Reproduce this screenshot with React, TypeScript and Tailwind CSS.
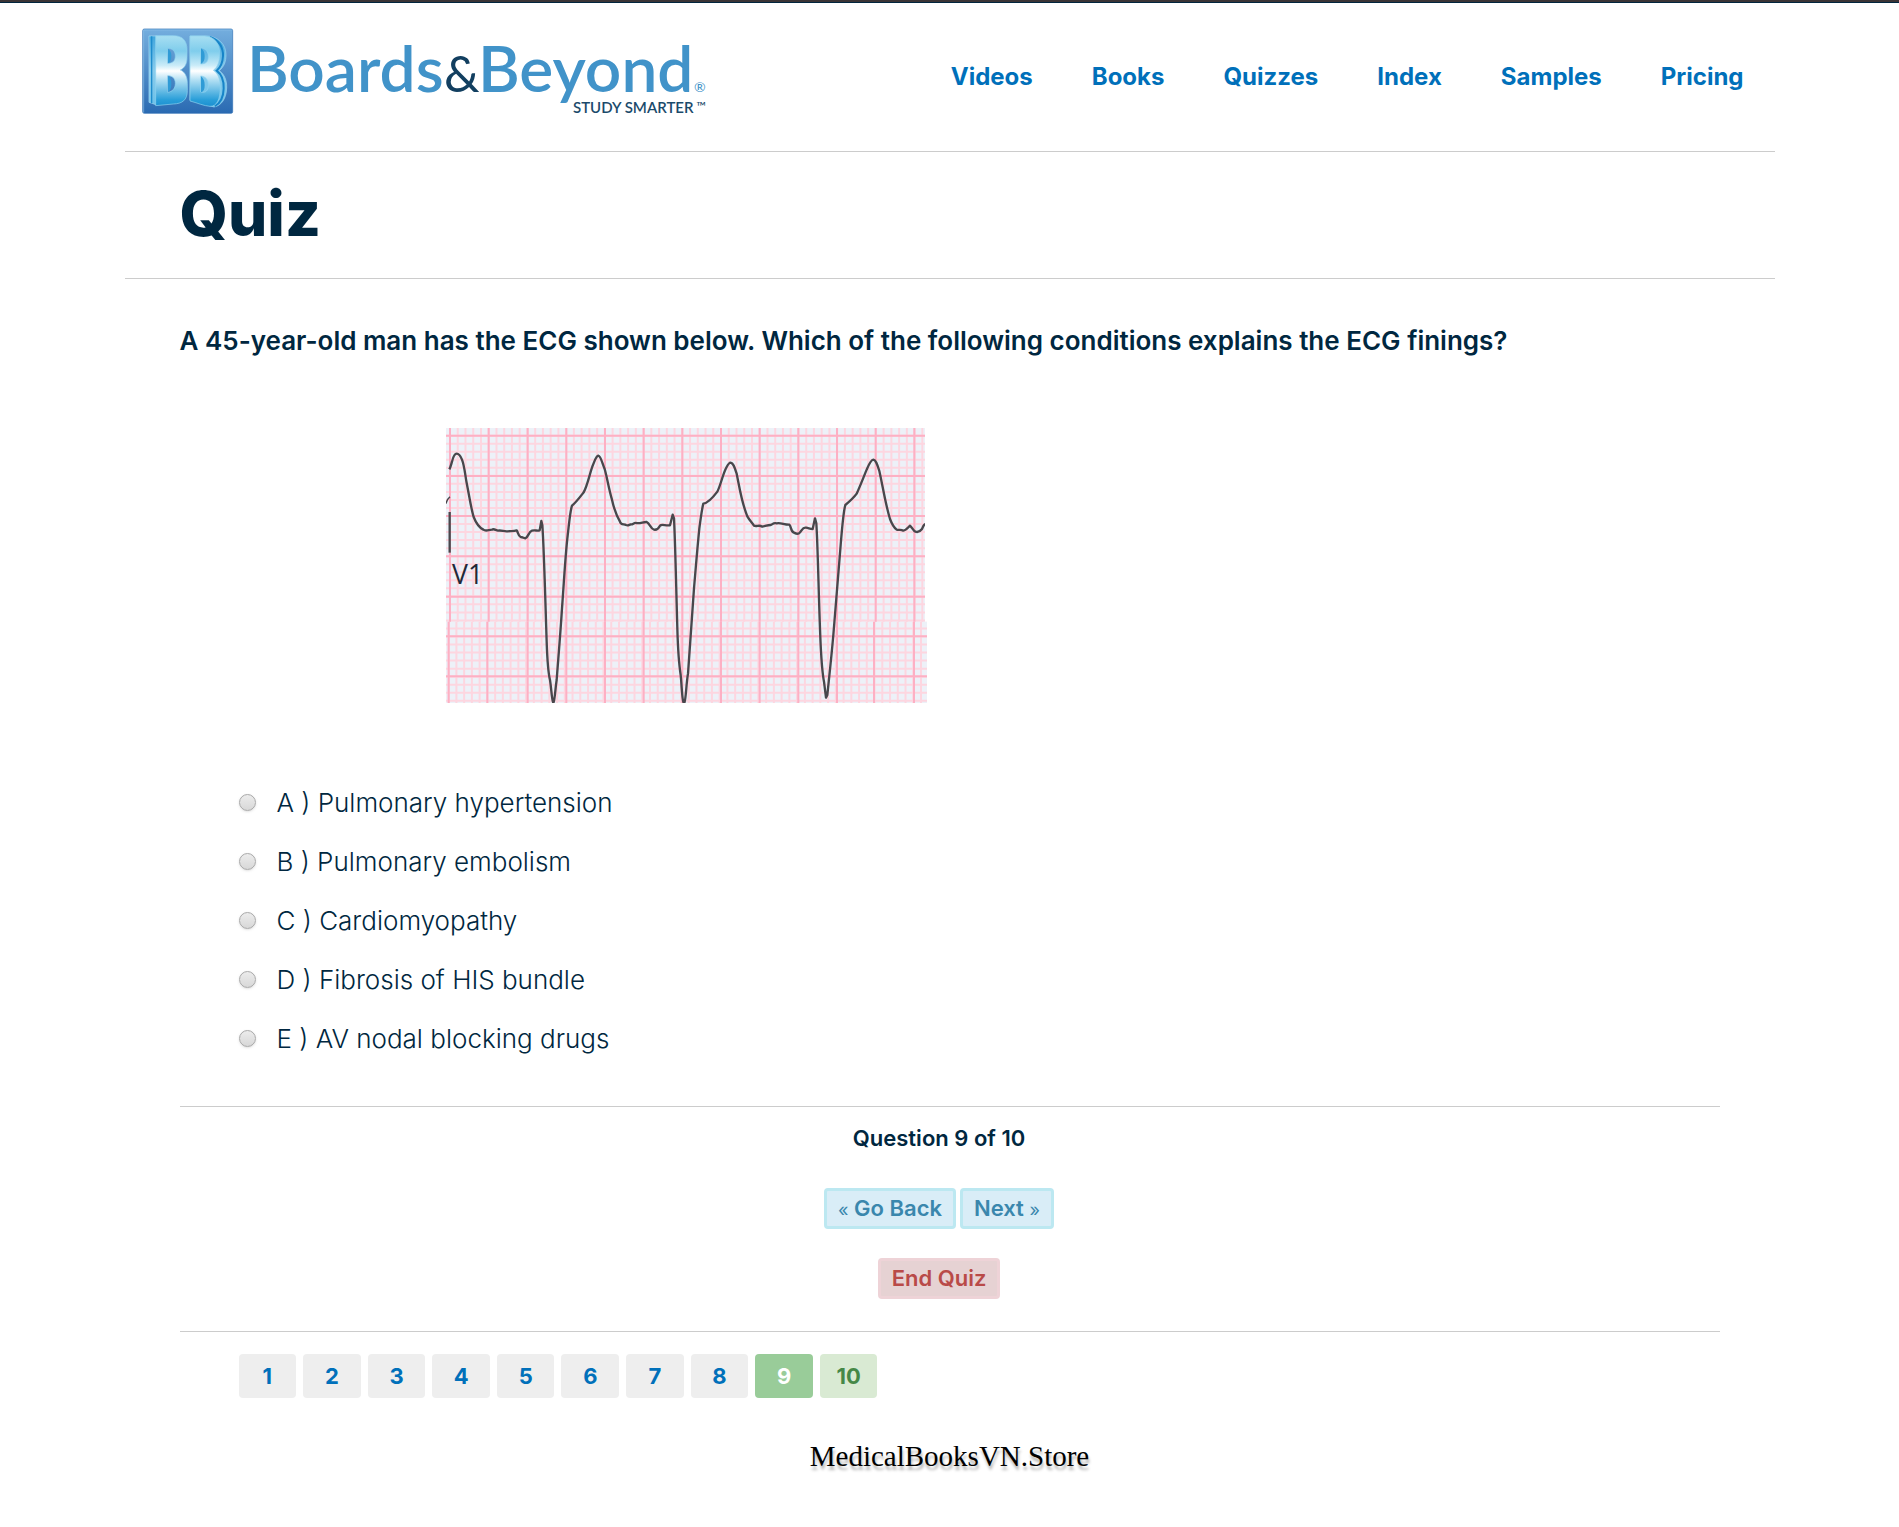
import { useState } from 'react';

const NAV = ['Videos', 'Books', 'Quizzes', 'Index', 'Samples', 'Pricing'];

const ANSWERS = [
  { key: 'A', text: 'Pulmonary hypertension' },
  { key: 'B', text: 'Pulmonary embolism' },
  { key: 'C', text: 'Cardiomyopathy' },
  { key: 'D', text: 'Fibrosis of HIS bundle' },
  { key: 'E', text: 'AV nodal blocking drugs' },
];

const PAGES = [1, 2, 3, 4, 5, 6, 7, 8, 9, 10];

function Logo() {
  return (
    <svg
      viewBox="136 20 576 104"
      className="block h-[104px] w-[576px]"
      role="img"
      aria-label="Boards & Beyond, Study Smarter"
    >
      <defs>
        <linearGradient id="tile" x1="0" y1="0" x2="0" y2="1">
          <stop offset="0" stopColor="#74aede" />
          <stop offset="1" stopColor="#2a6ab2" />
        </linearGradient>
        <linearGradient id="face" gradientUnits="userSpaceOnUse" x1="0" y1="46" x2="0" y2="260">
          <stop offset="0" stopColor="#a9dff2" />
          <stop offset="0.22" stopColor="#7fcdec" />
          <stop offset="0.42" stopColor="#c9ebf8" />
          <stop offset="0.5" stopColor="#ffffff" />
          <stop offset="0.62" stopColor="#b5e1f4" />
          <stop offset="0.9" stopColor="#2b9fd9" />
          <stop offset="1" stopColor="#1b8fd0" />
        </linearGradient>
        <linearGradient id="side" gradientUnits="userSpaceOnUse" x1="0" y1="46" x2="0" y2="260">
          <stop offset="0" stopColor="#3fa5dc" />
          <stop offset="0.5" stopColor="#8accec" />
          <stop offset="1" stopColor="#6cc0e8" />
        </linearGradient>
      </defs>
      <g transform="translate(136 20) scale(0.33333)">
        <rect x="20" y="27" width="270" height="253" rx="5" fill="url(#tile)" stroke="#2f6fb3" strokeWidth="2" />
        <path d="M23 278V30H287" fill="none" stroke="#8dbfe8" strokeWidth="2" />
        <path d="M39 48H62V255L39 247Z" fill="url(#side)" stroke="#a8dcf4" strokeWidth="2" />
        <path d="M47 49V250" stroke="#1e8dce" strokeWidth="4" />
        <path
          fillRule="evenodd"
          fill="url(#face)"
          stroke="#8fd3f0"
          strokeWidth="2"
          d="M59 47H112C140 47 153 62 153 90V112C153 132 146 144 133 150C147 156 154 170 154 190V212C154 240 139 251 112 252L59 257ZM95 85V130C108 130 118 124 118 108C118 92 108 85 95 85ZM95 167V217C109 215 118 206 118 190C118 174 108 167 95 167Z"
        />
        <path d="M96 86C104 92 106 98 106 108C106 120 103 126 96 130ZM96 168C104 174 106 180 106 191C106 204 103 212 96 216Z" fill="#2f9bd6" />
        <path
          d="M162 48H214C246 50 270 72 270 104C270 126 264 140 250 152C266 164 273 182 272 204C271 238 254 258 234 261L162 240Z"
          fill="url(#side)"
          stroke="#9bd6f2"
          strokeWidth="2"
        />
        <path d="M222 51C250 62 262 80 261 108C260 130 254 142 242 152C258 164 264 182 263 206C262 236 250 252 236 258" fill="none" stroke="#1784c8" strokeWidth="6" />
        <path
          fillRule="evenodd"
          fill="url(#face)"
          stroke="#8fd3f0"
          strokeWidth="2"
          d="M162 48H206C236 50 251 70 251 100C251 128 244 142 232 151C246 160 253 178 253 202C253 238 242 260 222 259C204 258 182 248 162 243ZM194 84V132C208 132 217 126 217 110C217 94 208 85 194 84ZM194 168V216C208 220 217 212 217 196C217 178 208 169 194 168Z"
        />
        <path d="M195 85C203 91 206 98 206 109C206 121 203 128 195 131ZM195 169C203 176 206 184 206 195C206 208 203 215 195 217Z" fill="#2f9bd6" />
      </g>
      <g className="font-['Lato',sans-serif]" fill="#4193c9">
        <text x="247" y="92" className="text-[64px] font-semibold">Boards</text>
        <text x="478" y="92" className="text-[64px] font-semibold">Beyond</text>
        <text x="444" y="92" className="text-[50px]" fill="#123f60">&amp;</text>
        <text x="694" y="92" className="text-[14px]">®</text>
        <text x="573" y="113" className="text-[15px] font-semibold" fill="#1b4a6b">STUDY SMARTER</text>
        <text x="696" y="111" className="text-[13px]" fill="#1b4a6b">™</text>
      </g>
    </svg>
  );
}

const MAJOR_X = [60, 176, 293, 409, 525, 641, 757, 873, 989, 1105, 1221, 1337, 1453];
const MAJOR_X_LOWER = [56, 172, 293, 409, 525, 641, 757, 873, 989, 1105, 1221, 1332, 1452];
const MAJOR_Y = [62, 183, 303, 424, 545, 664, 784];
const MINOR_X = Array.from({ length: 63 }, (_, i) => 60 + i * 23.23);
const MINOR_Y = Array.from({ length: 35 }, (_, i) => 62 + i * 24.1);

function Ecg() {
  return (
    <svg
      viewBox="48 39 1443 825"
      className="ml-[266px] block h-[275px] w-[481px]"
      role="img"
      aria-label="ECG tracing, lead V1"
    >
      <defs>
        <clipPath id="paper">
          <path d="M48 39H1485V620H1491V864H48Z" />
        </clipPath>
      </defs>
      <g clipPath="url(#paper)">
        <rect x="48" y="39" width="1443" height="825" fill="#edf1f8" />
        <g stroke="#fdd6e0" strokeWidth="6">
          {MINOR_X.map((x) => (
            <path key={x} d={`M${x} 39V620M${x - 4} 620V864`} />
          ))}
          {MINOR_Y.map((y) => (
            <path key={y} d={`M48 ${y}H1491`} />
          ))}
        </g>
        <g stroke="#fdb0c4" strokeWidth="6">
          {MAJOR_X.map((x) => (
            <path key={x} d={`M${x} 39V620`} />
          ))}
          {MAJOR_X_LOWER.map((x) => (
            <path key={x} d={`M${x} 620V864`} />
          ))}
          {MAJOR_Y.map((y) => (
            <path key={y} d={`M48 ${y}H1491`} />
          ))}
        </g>
        <g fill="none" stroke="#48474c" strokeWidth="7" strokeLinejoin="round">
          <path d="M48 266C50 256 54 250 60 245" strokeWidth="4" />
          <path d="M59 291V413" />
          <path d="M58 163C62 156 63 150 66 140C70 124 74 116 80 116C88 116 92 124 96 134C103 152 105 176 110 204C118 244 124 284 131 306C138 324 148 338 160 344C168 350 176 344 186 344C192 340 197 346 204 347C214 345 222 350 232 349C240 347 250 350 260 346C264 350 264 362 272 366C278 366 282 370 286 370C294 368 296 350 306 347C314 345 322 348 329 346L334 318L337 330C342 400 346 560 350 680C352 740 355 775 360 795C364 820 366 860 370 864C374 860 376 820 380 795C384 740 391 660 396 580C402 500 406 420 413 362C418 320 420 290 426 272C438 262 450 246 461 232C472 212 478 180 488 152C494 138 498 123 505 122C512 123 516 142 524 162C532 190 536 220 546 254C552 282 562 306 570 320C573 332 582 326 588 330C594 333 596 330 602 328C608 330 612 322 618 324C630 327 640 320 650 321C660 326 662 342 672 344C682 346 686 340 690 332C696 326 706 333 720 331L728 299L732 310C736 390 738 500 742 640C744 710 748 755 752 780C756 820 756 860 762 866C768 860 768 810 774 776C780 700 786 610 792 520C798 450 802 400 808 340C812 310 816 280 820 266C836 264 850 246 862 230C872 210 878 180 888 160C892 152 896 143 902 143C910 144 914 158 920 176C928 214 934 260 952 304C960 318 966 322 972 332C980 336 988 328 996 335C1004 334 1012 330 1022 330C1028 328 1030 322 1040 325C1052 322 1064 330 1078 329C1084 334 1082 350 1092 353C1098 356 1104 360 1110 352C1116 346 1118 336 1128 338C1138 340 1140 342 1148 342L1155 310L1159 325C1164 400 1166 560 1172 690C1174 730 1178 780 1182 800L1188 848L1192 840C1196 800 1204 730 1210 660C1218 570 1224 480 1232 390C1236 340 1240 290 1246 270C1258 260 1270 250 1280 236C1290 214 1300 188 1310 164C1316 150 1322 135 1330 134C1338 135 1342 150 1348 168C1358 212 1366 266 1380 312C1386 328 1392 338 1400 344C1408 346 1412 342 1420 347C1428 346 1434 338 1440 332C1446 336 1450 348 1456 350C1462 352 1470 350 1476 342C1480 334 1482 326 1487 328" />
        </g>
        <text x="66" y="507" fill="#222838" className="font-['Open_Sans',sans-serif] text-[80px]">
          V1
        </text>
      </g>
    </svg>
  );
}

function pageClass(page: number, current: number) {
  if (page === current) return 'bg-[#99cc99] text-white';
  if (page === 10) return 'bg-[#d9ead3] text-[#468847]';
  return 'bg-[#eeeeee] text-[#0070ba]';
}

export default function App() {
  const [answer, setAnswer] = useState('');
  const current = 9;

  return (
    <div className="bg-white font-['Inter',sans-serif] text-[#002740]">
      <div className="h-[3px] border-b border-[#00263f] bg-[#3a3435]" />
      <div className="mx-auto max-w-[1650px]">
        <header className="flex items-start justify-between border-b border-[#cccccc] pt-[17px] pr-[31px] pb-[27px] pl-[11px]">
          <a href="#">
            <Logo />
          </a>
          <nav className="flex gap-[59px] pt-[39px] text-[24px] leading-9 font-bold text-[#0070ba]">
            {NAV.map((item) => (
              <a key={item} href="#">
                {item}
              </a>
            ))}
          </nav>
        </header>

        <div className="border-b border-[#cccccc] px-[55px] pt-[22px] pb-6">
          <h1 className="text-[62px] leading-[80px] font-extrabold">Quiz</h1>
        </div>

        <main className="px-[55px] pt-11">
          <h2 className="text-[26px] leading-9 font-semibold">
            A 45-year-old man has the ECG shown below. Which of the following conditions explains the ECG finings?
          </h2>

          <div className="pt-[69px] pb-[70px]">
            <Ecg />
          </div>

          <div className="flex flex-col pb-[38px] pl-[59px]">
            {ANSWERS.map((a) => (
              <label key={a.key} className="flex h-[59px] items-center text-[26px] font-light">
                <input
                  type="radio"
                  name="answer"
                  value={a.key}
                  checked={answer === a.key}
                  onChange={() => setAnswer(a.key)}
                  className="mr-[21px] size-[17px] appearance-none rounded-full border border-[#a8a8a8] bg-linear-to-b from-[#ececec] to-[#d8d8d8] shadow-sm checked:border-[5px] checked:border-[#0070ba]"
                />
                {a.key} ) {a.text}
              </label>
            ))}
          </div>

          <section className="flex flex-col items-center border-y border-[#cccccc] pt-[15px] pr-[21px] pb-8">
            <p className="text-[22px] leading-8 font-semibold">Question 9 of 10</p>
            <div className="mt-[34px] flex gap-1 text-[22px] leading-[35px] font-semibold text-[#3a87ad]">
              <button type="button" className="rounded-[4px] border-3 border-[#bce8f1] bg-[#d9edf7] px-[11px]">
                <span className="text-[18px] leading-none font-normal">«</span> Go Back
              </button>
              <button type="button" className="rounded-[4px] border-3 border-[#bce8f1] bg-[#d9edf7] px-[11px]">
                Next <span className="text-[18px] leading-none font-normal">»</span>
              </button>
            </div>
            <button
              type="button"
              className="mt-[29px] rounded-[4px] border-3 border-[#eed3d7] bg-[#e6d2d3] px-[11px] text-[22px] leading-[35px] font-semibold text-[#b94a48]"
            >
              End Quiz
            </button>
          </section>

          <div className="grid w-[698px] grid-cols-10 gap-[7px] pt-[22px] pl-[59px]">
            {PAGES.map((page) => (
              <button
                key={page}
                type="button"
                className={`h-11 rounded-[4px] text-[22px] font-bold ${pageClass(page, current)}`}
              >
                {page}
              </button>
            ))}
          </div>
        </main>
      </div>

      <footer className="pt-[38px] pb-12 text-center font-['Palatino_Linotype','Book_Antiqua','Liberation_Serif',serif] text-[29px] leading-10 text-black text-shadow-[1px_4px_3px_rgb(0_0_0/0.3)]">
        MedicalBooksVN.Store
      </footer>
    </div>
  );
}
